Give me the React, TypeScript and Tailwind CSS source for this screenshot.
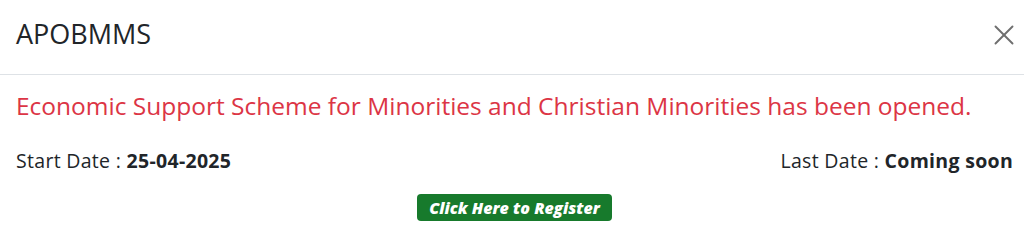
import { X } from 'lucide-react';

export default function App() {
  return (
    <div className="w-[1024px] h-[241px] bg-white overflow-hidden font-['Open_Sans',sans-serif]">
      <div className="flex items-center justify-between h-[75px] px-4 border-b border-[#dee2e6]">
        <h5 className="text-[27px] font-medium text-[#212529] leading-none -mt-[8px]">APOBMMS</h5>
        <button className="text-[#6f6f6f] -mr-[13px] -mt-[4px]">
          <X size={34} strokeWidth={1.35} />
        </button>
      </div>
      <div className="px-4 pt-[14px]">
        <p className="text-[24.5px] text-[#dc3545] leading-[34px]">
          Economic Support Scheme for Minorities and Christian Minorities has been opened.
        </p>
        <div className="flex justify-between mt-[24px] -mr-[5px] text-[19.5px] tracking-[0.3px] text-[#212529] leading-7">
          <span>
            Start Date : <b className="font-bold">25-04-2025</b>
          </span>
          <span>
            Last Date : <b className="font-bold">Coming soon</b>
          </span>
        </div>
        <div className="flex justify-center mt-[19px]">
          <a className="ml-[5px] bg-[#177a2c] text-white text-[16px] font-extrabold italic rounded-[4px] h-[27px] w-[195px] flex items-center justify-center">
            Click Here to Register
          </a>
        </div>
      </div>
    </div>
  );
}
